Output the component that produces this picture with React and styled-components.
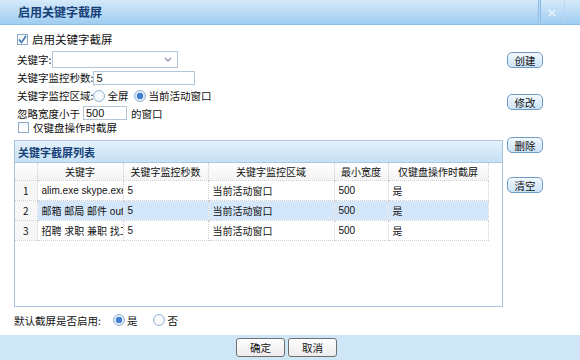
import React from 'react'
import styled, { createGlobalStyle } from 'styled-components'

const Global = createGlobalStyle`
  body {
    margin: 0;
    background: #fff;
    font-family: "Noto Sans CJK SC", "Liberation Sans", sans-serif;
    color: #111;
  }
`

const Root = styled.div`
  width: 580px;
  height: 360px;
  display: flex;
  flex-direction: column;
  overflow: hidden;
  background: #fff;
`

const TitleBar = styled.div`
  height: 24px;
  flex: none;
  display: flex;
  align-items: center;
  justify-content: space-between;
  background: linear-gradient(#d5e9fa, #9fcdf1);
  border-bottom: 1px solid #8dbde6;
`

const Title = styled.span`
  padding-left: 18px;
  font-size: 12px;
  font-weight: bold;
  color: #163f78;
  line-height: 24px;
`

const Close = styled.div`
  width: 24px;
  height: 24px;
  margin-right: 15px;
  border-left: 1px solid #b5d7f3;
  border-right: 1px solid #b5d7f3;
  box-shadow: inset 1px 0 0 #8fbfe6, -1px 0 0 #8fbfe6;
  display: flex;
  align-items: center;
  justify-content: center;
  color: #e8f1f9;
  font-size: 13px;
  font-family: "DejaVu Sans", sans-serif;
  font-weight: bold;
`

const Body = styled.div`
  flex: 1;
  display: flex;
  min-height: 0;
`

const Main = styled.div`
  width: 489px;
  margin-left: 14px;
  padding-top: 4px;
  display: flex;
  flex-direction: column;
`

const Side = styled.div`
  margin-left: 4px;
  padding-top: 27px;
  display: flex;
  flex-direction: column;
`

const Row = styled.div`
  height: ${({ h }) => h}px;
  display: flex;
  align-items: center;
  padding-left: ${({ indent }) => indent || 0}px;
  font-size: ${({ size }) => size || 10.5}px;
  white-space: nowrap;
`

const Box = styled.span`
  width: 11px;
  height: 11px;
  box-sizing: border-box;
  border: 1px solid #8eaac6;
  background: linear-gradient(#f4f8fc, #fff);
  display: inline-flex;
  align-items: center;
  justify-content: center;
  margin-right: 4px;
  flex: none;
`

const Radio = styled.span`
  width: 12px;
  height: 12px;
  box-sizing: border-box;
  border-radius: 50%;
  border: 1px solid #94b3d1;
  background: radial-gradient(circle, ${({ on }) => (on ? '#3d7fd0 0 3px, #dfeaf6 3.5px' : '#fff 0, #eef4fa 100%')});
  margin: 0 2px 0 ${({ gap }) => gap || 0}px;
  flex: none;
`

const Select = styled.div`
  width: 126px;
  height: 17px;
  box-sizing: border-box;
  border: 1px solid #b3c6d8;
  display: flex;
  align-items: center;
  justify-content: flex-end;
  padding-right: 5px;
  margin-left: 1px;
  color: #8a9aab;
`

const Input = styled.div`
  width: ${({ w }) => w}px;
  height: 14px;
  box-sizing: border-box;
  border: 1px solid #b3c6d8;
  display: flex;
  align-items: center;
  padding-left: 2px;
  margin: 0 ${({ mr }) => mr || 0}px 0 ${({ ml }) => ml || 0}px;
  font-family: "Liberation Sans", sans-serif;
  font-size: 11px;
`

const Panel = styled.div`
  margin-top: 6px;
  height: 167px;
  box-sizing: border-box;
  border: 1px solid #a9c4dc;
  display: flex;
  flex-direction: column;
`

const PanelHead = styled.div`
  height: 21px;
  flex: none;
  display: flex;
  align-items: center;
  padding-left: 3px;
  font-size: 11px;
  font-weight: bold;
  color: #163f78;
  background: linear-gradient(#e4f1fb, #c6e0f5);
  border-bottom: 1px solid #a9c8e2;
`

const Table = styled.table`
  width: 473px;
  border-collapse: collapse;
  table-layout: fixed;
  font-size: 10px;
`

const Th = styled.th`
  height: 17px;
  padding: 0;
  font-weight: normal;
  border: 1px dotted #cfcfcf;
  border-top: none;
  background: linear-gradient(#ffffff, #f3f3f3);
  &:first-child {
    border-left: none;
  }
`

const Tr = styled.tr`
  background: ${({ selected }) => (selected ? '#d4e7fa' : '#fff')};
`

const Td = styled.td`
  height: 19px;
  padding: 0 0 0 4px;
  border: 1px dotted #cfcfcf;
  overflow: hidden;
  white-space: nowrap;
  text-overflow: clip;
  font-family: ${({ latin }) => (latin ? '"Liberation Sans", "Noto Sans CJK SC", sans-serif' : 'inherit')};
  font-size: 10px;
  &:first-child {
    border-left: none;
    background: #f7f7f7;
    text-align: center;
    padding: 0;
  }
`

const SideButton = styled.div`
  width: 36px;
  height: 16px;
  box-sizing: border-box;
  margin-bottom: ${({ mb }) => mb || 0}px;
  border: 1px solid #6f9cc4;
  border-radius: 5px;
  background: linear-gradient(#f3f9fe, #cbe3f7);
  font-size: 10.5px;
  display: flex;
  align-items: center;
  justify-content: center;
  color: #111;
`

const Footer = styled.div`
  height: 25px;
  flex: none;
  background: #cfe6f7;
  display: flex;
  align-items: center;
  padding-left: 236px;
  gap: 3px;
`

const FootButton = styled.div`
  width: 49px;
  height: 19px;
  box-sizing: border-box;
  border: 1px solid #6f6f6f;
  border-radius: 3px;
  background: linear-gradient(#ffffff, #ececec);
  font-size: 10.5px;
  display: flex;
  align-items: center;
  justify-content: center;
`

const Check = () => (
  <svg width="9" height="9" viewBox="0 0 9 9">
    <path d="M1 4.5 L3.5 7.5 L8 1" fill="none" stroke="#3a74b8" strokeWidth="1.6" />
  </svg>
)

const Chevron = () => (
  <svg width="8" height="5" viewBox="0 0 8 5">
    <path d="M1 1 L4 4 L7 1" fill="none" stroke="#7d8da0" strokeWidth="1.2" />
  </svg>
)

const rows = [
  ['1', 'alim.exe skype.exe', '5', '当前活动窗口', '500', '是'],
  ['2', '邮箱 邮局 邮件 outlook', '5', '当前活动窗口', '500', '是'],
  ['3', '招聘 求职 兼职 找工作', '5', '当前活动窗口', '500', '是'],
]

const cols = [22, 86, 85, 126, 54, 100]

export default function App() {
  return (
    <Root>
      <Global />
      <TitleBar>
        <Title>启用关键字截屏</Title>
        <Close>×</Close>
      </TitleBar>
      <Body>
        <Main>
          <Row h={20} indent={3} size={11.5}>
            <Box>
              <Check />
            </Box>
            启用关键字截屏
          </Row>
          <Row h={20} indent={3}>
            关键字:
            <Select>
              <Chevron />
            </Select>
          </Row>
          <Row h={17} indent={3}>
            关键字监控秒数:
            <Input w={102}>5</Input>
          </Row>
          <Row h={19} indent={3}>
            关键字监控区域:
            <Radio />
            全屏
            <Radio on gap={6} />
            当前活动窗口
          </Row>
          <Row h={16} indent={3}>
            忽略宽度小于
            <Input w={44} ml={3} mr={4}>500</Input>
            的窗口
          </Row>
          <Row h={13} indent={4}>
            <Box />
            仅键盘操作时截屏
          </Row>
          <Panel>
            <PanelHead>关键字截屏列表</PanelHead>
            <Table>
              <colgroup>
                {cols.map((w, i) => (
                  <col key={i} style={{ width: w }} />
                ))}
              </colgroup>
              <thead>
                <tr>
                  <Th />
                  <Th>关键字</Th>
                  <Th>关键字监控秒数</Th>
                  <Th>关键字监控区域</Th>
                  <Th>最小宽度</Th>
                  <Th>仅键盘操作时截屏</Th>
                </tr>
              </thead>
              <tbody>
                {rows.map((r, i) => (
                  <Tr key={r[0]} selected={i === 1}>
                    <Td>{r[0]}</Td>
                    <Td latin>{r[1]}</Td>
                    <Td latin>{r[2]}</Td>
                    <Td>{r[3]}</Td>
                    <Td latin>{r[4]}</Td>
                    <Td>{r[5]}</Td>
                  </Tr>
                ))}
              </tbody>
            </Table>
          </Panel>
          <Row h={26}>
            默认截屏是否启用:
            <Radio on gap={12} />
            是
            <Radio gap={16} />
            否
          </Row>
        </Main>
        <Side>
          <SideButton mb={26}>创建</SideButton>
          <SideButton mb={27}>修改</SideButton>
          <SideButton mb={24}>删除</SideButton>
          <SideButton>清空</SideButton>
        </Side>
      </Body>
      <Footer>
        <FootButton>确定</FootButton>
        <FootButton>取消</FootButton>
      </Footer>
    </Root>
  )
}
